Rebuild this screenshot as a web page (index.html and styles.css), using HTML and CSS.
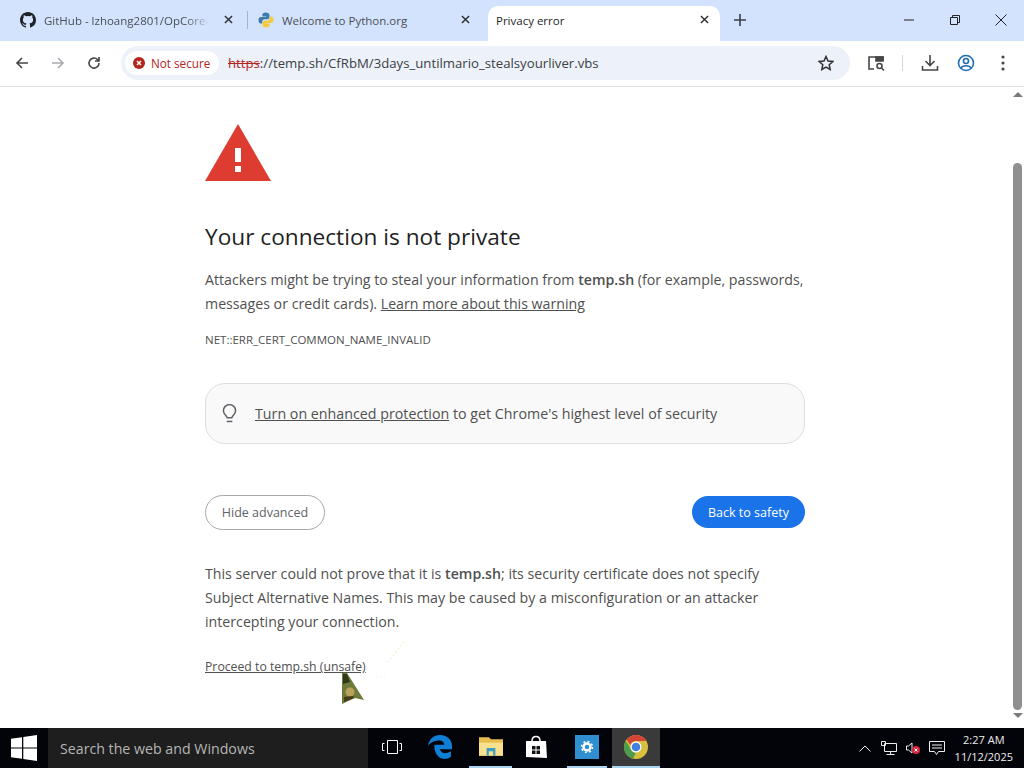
FILE: index.html
```html
<!DOCTYPE html>
<html lang="en">
<head>
    <meta charset="UTF-8">
    <title>Privacy error</title>
    <link rel="stylesheet" href="styles.css">
</head>
<body>
    <div class="tabstrip">
        <div class="tab">
            <svg class="favicon" viewBox="0 0 16 16"><path fill="#1f2328" d="M8 0C3.58 0 0 3.58 0 8c0 3.54 2.29 6.53 5.47 7.59.4.07.55-.17.55-.38v-1.34c-2.23.48-2.7-1.07-2.7-1.07-.36-.92-.89-1.17-.89-1.17-.73-.5.05-.49.05-.49.8.06 1.23.83 1.23.83.71 1.23 1.87.87 2.33.66.07-.52.28-.87.5-1.07-1.78-.2-3.64-.89-3.64-3.95 0-.87.31-1.59.82-2.15-.08-.2-.36-1.02.08-2.12 0 0 .67-.21 2.2.82a7.6 7.6 0 0 1 4 0c1.53-1.04 2.2-.82 2.2-.82.44 1.1.16 1.92.08 2.12.51.56.82 1.27.82 2.15 0 3.07-1.87 3.75-3.65 3.95.29.25.54.73.54 1.48v2.2c0 .21.15.46.55.38A8 8 0 0 0 16 8c0-4.42-3.58-8-8-8z"/></svg>
            <span class="tab-title tab-fade">GitHub - lzhoang2801/OpCore-</span>
            <svg class="tab-close" viewBox="0 0 10 10"><path d="M1 1l8 8M9 1l-8 8"/></svg>
        </div>
        <div class="tab-sep"></div>
        <div class="tab">
            <svg class="favicon" viewBox="0 0 16 16"><path fill="#3f7cac" d="M8 .5c-3 0-3.6 1.2-3.6 2.4V4.500h3.800V5H3C1.500 5 .5 6.200.5 8.200S1.500 11.500 3 11.500h1.200V9.700c0-1.300 1.100-2.400 2.500-2.400h2.700c1.100 0 2-.9 2-2V2.900C11.400 1.400 10 .5 8 .5z"/><path fill="#f5c93a" d="M8 15.500c3 0 3.600-1.200 3.600-2.400v-1.600H7.800V11H13c1.500 0 2.500-1.200 2.500-3.200S14.500 4.500 13 4.500h-1.200v1.800c0 1.300-1.100 2.400-2.500 2.400H6.600c-1.100 0-2 .9-2 2v2.400c0 1.500 1.400 2.400 3.400 2.400z"/></svg>
            <span class="tab-title">Welcome to Python.org</span>
            <svg class="tab-close" viewBox="0 0 10 10"><path d="M1 1l8 8M9 1l-8 8"/></svg>
        </div>
        <div class="tab tab-active">
            <span class="tab-title">Privacy error</span>
            <svg class="tab-close" viewBox="0 0 10 10"><path d="M1 1l8 8M9 1l-8 8"/></svg>
        </div>
        <svg class="new-tab" viewBox="0 0 12 12"><path d="M6 0v12M0 6h12"/></svg>
        <div class="window-controls">
            <svg viewBox="0 0 12 12"><path d="M1 6h10"/></svg>
            <svg viewBox="0 0 12 12"><path d="M1.500 3.500h7v7h-7zM3.500 3.500v-2h7v7h-2"/></svg>
            <svg viewBox="0 0 12 12"><path d="M.5 .5l11 11M11.500 .5l-11 11"/></svg>
        </div>
    </div>

    <div class="toolbar">
        <svg class="tool" viewBox="0 0 16 16"><path d="M14 8H3M8 3L3 8l5 5"/></svg>
        <svg class="tool tool-off" viewBox="0 0 16 16"><path d="M2 8h11M8 3l5 5-5 5"/></svg>
        <svg class="tool" viewBox="0 0 16 16"><path d="M13 8a5 5 0 1 1-1.500-3.500L13 6M13 2v4H9"/></svg>
        <div class="omnibox">
            <div class="chip">
                <svg class="chip-icon" viewBox="0 0 12 12"><circle cx="6" cy="6" r="6" fill="#b3261e"/><path d="M4 4l4 4M8 4l-4 4" stroke="#fff" stroke-width="1.500"/></svg>
                <span>Not secure</span>
            </div>
            <div class="url"><s class="url-scheme">https</s>://temp.sh/CfRbM/3days_untilmario_stealsyourliver.vbs</div>
            <svg class="star" viewBox="0 0 16 16"><path d="M8 1.500l2 4.500 4.800.5-3.600 3.200 1 4.800L8 12.100l-4.200 2.400 1-4.800L1.200 6.500 6 6z"/></svg>
        </div>
        <div class="toolbar-right">
            <svg class="tool" viewBox="0 0 18 18"><path d="M7 15H2V3h14v4"/><path d="M9 3h7v4H9z" fill="#444746"/><circle cx="12.500" cy="12" r="2.500"/><path d="M14.500 14l2.500 2.500"/></svg>
            <div class="toolbar-sep"></div>
            <svg class="tool" viewBox="0 0 18 18"><path d="M9 1v10M4.500 7L9 11.500 13.500 7M1.500 12v4h15v-4"/></svg>
            <svg class="tool tool-profile" viewBox="0 0 18 18"><circle cx="9" cy="9" r="7.500"/><circle cx="9" cy="7" r="2.500"/><path d="M4 14c1.500-3 8.500-3 10 0"/></svg>
            <svg class="tool tool-menu" viewBox="0 0 4 16"><circle cx="2" cy="2" r="1.600"/><circle cx="2" cy="8" r="1.600"/><circle cx="2" cy="14" r="1.600"/></svg>
        </div>
    </div>

    <div class="viewport">
        <div class="page">
            <svg class="warn-icon" viewBox="0 0 66 57"><path fill="#de3c31" d="M33 0l33 57H0z"/><path fill="#fff" d="M30 24h6v14h-6zM30 42h6v6h-6z"/></svg>
            <h1>Your connection is not private</h1>
            <p class="text">Attackers might be trying to steal your information from <b>temp.sh</b> (for example, passwords, messages or credit cards). <a>Learn more about this warning</a></p>
            <p class="error-code">NET::ERR_CERT_COMMON_NAME_INVALID</p>
            <div class="protect-box">
                <svg class="bulb" viewBox="0 0 16 20"><path d="M5.500 14.500C5 12 1.500 11 1.500 7a6.500 6.500 0 0 1 13 0c0 4-3.500 5-4 7.500z"/><path d="M5 18.500h6"/></svg>
                <span><a>Turn on enhanced protection</a> to get Chrome's highest level of security</span>
            </div>
            <div class="button-row">
                <button class="btn-outline">Hide advanced</button>
                <button class="btn-primary">Back to safety</button>
            </div>
            <p class="text details">This server could not prove that it is <b>temp.sh</b>; its security certificate does not specify Subject Alternative Names. This may be caused by a misconfiguration or an attacker intercepting your connection.</p>
            <a class="proceed">Proceed to temp.sh (unsafe)</a>
        </div>
        <div class="scrollbar">
            <div class="arrow-up"></div>
            <div class="thumb"></div>
            <div class="arrow-down"></div>
        </div>
        <svg class="cursor" viewBox="0 0 24 32"><path fill="#6d7a3a" d="M1 0h5l17 27-9-2L1 31z"/><path fill="#2f3a1c" d="M2 1h4l3 8-7 2z"/><circle cx="9" cy="19" r="4.500" fill="#b8a25e"/><path fill="#4a3a1a" d="M3 24l9-1 1 2-10 4z"/></svg>
        <svg class="trail" viewBox="0 0 30 40"><path fill="none" stroke="#f1ecc4" stroke-dasharray="2 2" d="M28 1L12 21"/><path fill="none" stroke="#f5efc8" stroke-dasharray="1 3" d="M0 36h12"/></svg>
    </div>

    <div class="taskbar">
        <div class="start">
            <svg viewBox="0 0 26 26"><path fill="#fff" d="M0 3.700l11-1.500v10.200H0zM12.300 2L26 0v12.400H12.300zM0 13.600h11v10.200L0 22.300zM12.300 13.600H26V26l-13.700-2z"/></svg>
        </div>
        <div class="search">Search the web and Windows</div>
        <div class="task-icons">
            <div class="task-item task-view">
                <svg viewBox="0 0 20 14"><path fill="none" stroke="#fff" d="M5.500 .5h10v13h-10zM2.500 3.500h-2v7h2M17.500 3.500h2v7h-2"/></svg>
            </div>
            <div class="task-item">
                <svg viewBox="0 0 22 22"><path fill="#0f7fd6" d="M11 0C5 0 1 4 0 10c2-3 6-5 10-5 3 0 5 2 5 4H6c-1 6 3 13 9 13 2 0 4-.5 6-2v-5c-3 2-9 3-10-2h11v-3C22 4 17 0 11 0z"/></svg>
            </div>
            <div class="task-item task-open task-explorer">
                <svg viewBox="0 0 22 20"><path fill="#e8bd4f" d="M0 1h9l2 2h11v15H0z"/><path fill="#f8e08e" d="M0 6h22v12H0z"/><path fill="#3a9bc4" d="M7 11h8v7h-2v-4H9v4H7z"/></svg>
            </div>
            <div class="task-item">
                <svg viewBox="0 0 22 24"><path fill="#fff" d="M1 6h20l1 17-21-1z"/><path fill="none" stroke="#fff" stroke-width="1.500" d="M7 6c0-6 8-6 8 0"/><path fill="#111" d="M7 11h3.500v3.500H7zM11.500 11H15v3.500h-3.500zM7 15.500h3.500V19H7zM11.500 15.500H15V19h-3.500z"/></svg>
            </div>
            <div class="task-item task-open task-settings">
                <svg viewBox="0 0 24 24"><path fill="#2f8fd0" d="M0 0h24v24H0z"/><circle cx="12" cy="12" r="3.500" fill="none" stroke="#fff" stroke-width="2.500"/><circle cx="12" cy="12" r="5.500" fill="none" stroke="#fff" stroke-width="1.500" stroke-dasharray="2 2.300"/></svg>
            </div>
            <div class="task-item task-open task-current">
                <svg viewBox="0 0 24 24"><circle cx="12" cy="12" r="12" fill="#d8c03f"/><path fill="#d64437" d="M12 0a12 12 0 0 1 10.400 6H12a6 6 0 0 0-5.700 4L2.600 4.700A12 12 0 0 1 12 0z"/><path fill="#4d9c4d" d="M1.800 5.700l5 8.600a6 6 0 0 0 5 3.700L9 23.700A12 12 0 0 1 1.800 5.700z"/><circle cx="12" cy="12" r="5.500" fill="#fff"/><circle cx="12" cy="12" r="4.300" fill="#3f7fe0"/></svg>
            </div>
        </div>
        <div class="tray">
            <svg class="tray-icon tray-caret" viewBox="0 0 12 7"><path d="M.5 6.500l5.500-5.500 5.500 5.500"/></svg>
            <svg class="tray-icon tray-net" viewBox="0 0 16 14"><path d="M3.500 2.500h12v8h-12zM9.500 10.500v3M5.500 13.500h8M.5 .5h4v4h-4z"/></svg>
            <div class="tray-sound">
                <svg class="tray-icon tray-speaker" viewBox="0 0 8 12"><path d="M6.500 1v10L3 8H1V4h2z"/></svg>
                <svg class="muted" viewBox="0 0 8 8"><circle cx="4" cy="4" r="4" fill="#d7263d"/><path d="M2.500 2.500l3 3M5.500 2.500l-3 3" stroke="#fff"/></svg>
            </div>
            <svg class="tray-icon tray-note" viewBox="0 0 16 15"><path d="M.5 .5h15v10H9.500l-2 3-2-3h-5zM3 4h10M3 7h10"/></svg>
            <div class="clock">
                <div>2:27 AM</div>
                <div>11/12/2025</div>
            </div>
        </div>
    </div>
</body>
</html>
```

FILE: styles.css
```css
* {
    box-sizing: border-box;
}

html, body {
    margin: 0;
    height: 768px;
    overflow: hidden;
}

body {
    display: flex;
    flex-direction: column;
    width: 1024px;
    font-family: "Open Sans", "Noto Sans", sans-serif;
    background-color: #fff;
}

svg {
    display: block;
    flex: none;
}

/* tabs */
.tabstrip {
    display: flex;
    align-items: flex-end;
    height: 41px;
    padding-left: 8px;
    background-color: #d3e3fd;
}

.tab {
    display: flex;
    align-items: center;
    width: 232px;
    height: 35px;
    padding: 0 7px 7px 12px;
    font-size: 11.500px;
    color: #4a4f57;
}

.tab-sep {
    width: 1px;
    height: 18px;
    margin: 0 -1px 12px 7px;
    background-color: #a9b4c8;
}

.tab:nth-child(3) {
    width: 226px;
    margin-left: 7px;
    padding-left: 4px;
    padding-right: 10px;
}

.tab-active {
    margin-left: 8px;
    padding: 0 11px 7px 8px;
    background-color: #fff;
    border-radius: 10px 10px 0 0;
    color: #1f1f1f;
}

.favicon {
    width: 16px;
    height: 16px;
    margin-right: 8px;
}

.tab-title {
    flex: 1;
    overflow: hidden;
    white-space: nowrap;
}

.tab-fade {
    margin-right: 12px;
    -webkit-mask-image: linear-gradient(to right, #000 84%, transparent 100%);
    mask-image: linear-gradient(to right, #000 84%, transparent 100%);
}

.tab-close {
    width: 9px;
    height: 9px;
    margin-bottom: 1px;
    fill: none;
    stroke: #2b2f33;
    stroke-width: 1.600;
}

.new-tab {
    width: 12px;
    height: 12px;
    margin: 0 0 15px 14px;
    fill: none;
    stroke: #3a3f45;
    stroke-width: 1.600;
}

.window-controls {
    display: flex;
    gap: 34px;
    margin-left: auto;
    margin-bottom: 15px;
    padding-right: 17px;
}

.window-controls svg {
    width: 12px;
    height: 12px;
    fill: none;
    stroke: #222;
    stroke-width: 1;
}

/* toolbar */
.toolbar {
    display: flex;
    align-items: center;
    height: 46px;
    padding: 0 14px 1px;
    background-color: #fff;
    border-bottom: 1px solid #dfe1e5;
}

.tool {
    width: 16px;
    height: 16px;
    margin-right: 20px;
    fill: none;
    stroke: #444746;
    stroke-width: 1.600;
}

.tool-off {
    stroke: #a8abaf;
}

.omnibox {
    display: flex;
    align-items: center;
    width: 729px;
    height: 34px;
    margin-left: -1px;
    padding-left: 4px;
    background-color: #edf2fa;
    border-radius: 17px;
}

.chip {
    display: flex;
    align-items: center;
    height: 24px;
    width: 94px;
    padding-left: 8px;
    background-color: #fff;
    border-radius: 12px;
    font-size: 11.700px;
    color: #b3261e;
}

.chip-icon {
    width: 12px;
    height: 12px;
    margin-right: 6px;
}

.url {
    flex: 1;
    margin-left: 9px;
    font-size: 13.200px;
    color: #3c4043;
    white-space: nowrap;
}

.url-scheme {
    color: #b3261e;
}

.star {
    width: 16px;
    height: 16px;
    margin-right: 16px;
    fill: none;
    stroke: #333;
    stroke-width: 1.500;
}

.toolbar-right {
    display: flex;
    align-items: center;
    margin-left: 17px;
}

.toolbar-right .tool {
    width: 18px;
    height: 18px;
    margin-right: 0;
}

.toolbar-sep {
    width: 1px;
    height: 16px;
    margin: 0 18px 0 17px;
    background-color: #d5d7db;
}

.toolbar-right .tool-profile {
    margin-left: 18px;
    stroke: #1f6fb5;
}

.toolbar-right .tool-menu {
    width: 4px;
    height: 16px;
    margin-left: 26px;
    fill: #444746;
    stroke: none;
}

/* page */
.viewport {
    position: relative;
    display: flex;
    height: 641px;
}

.page {
    flex: 1;
    padding: 37px 0 0 205px;
    color: #505050;
}

.warn-icon {
    width: 66px;
    height: 57px;
}

h1 {
    margin: 41px 0 0;
    font-size: 22.650px;
    font-weight: 400;
    line-height: 30px;
    color: #1f1f1f;
}

.text {
    width: 601px;
    margin: 16px 0 0;
    font-size: 14.200px;
    line-height: 24px;
}

.text b {
    font-weight: 600;
}

a {
    color: inherit;
    text-decoration: underline;
}

.error-code {
    margin: 16px 0 0;
    font-size: 11.500px;
    line-height: 16px;
}

.protect-box {
    display: flex;
    align-items: center;
    width: 600px;
    height: 61px;
    margin-top: 35px;
    padding-left: 16px;
    background-color: #f9f9f9;
    border: 1px solid #dedede;
    border-radius: 20px;
    font-size: 14.250px;
}

.bulb {
    width: 15px;
    height: 19px;
    margin-right: 18px;
    fill: none;
    stroke: #5f6368;
    stroke-width: 1.600;
}

.button-row {
    display: flex;
    justify-content: space-between;
    align-items: flex-start;
    width: 600px;
    margin-top: 51px;
}

button {
    font-family: inherit;
    font-size: 12.500px;
    border-radius: 18px;
}

.btn-outline {
    width: 120px;
    height: 35px;
    color: #5f6368;
    background-color: #fff;
    border: 1px solid #a5a8ad;
}

.btn-primary {
    width: 113px;
    height: 32px;
    margin-top: 1px;
    color: #fff;
    background-color: #1a73e8;
    border: none;
}

.details {
    margin-top: 32px;
}

.proceed {
    display: block;
    margin-top: 25px;
    font-size: 12.250px;
    line-height: 16px;
}

.scrollbar {
    display: flex;
    flex-direction: column;
    align-items: center;
    width: 13px;
    padding: 5px 0 6px;
}

.arrow-up {
    border: 5px solid transparent;
    border-top: none;
    border-bottom: 5px solid #7a7a7a;
}

.arrow-down {
    margin-top: 3px;
    border: 5px solid transparent;
    border-bottom: none;
    border-top: 5px solid #7a7a7a;
}

.thumb {
    width: 9px;
    height: 547px;
    margin-top: 66px;
    background-color: #8f8f8f;
    border-radius: 5px;
}

.cursor {
    position: absolute;
    left: 341px;
    top: 586px;
    width: 24px;
    height: 32px;
}

.trail {
    position: absolute;
    left: 376px;
    top: 554px;
    width: 30px;
    height: 40px;
}

/* taskbar */
.taskbar {
    display: flex;
    align-items: stretch;
    height: 40px;
    background-color: #03040a;
}

.start {
    display: flex;
    align-items: center;
    justify-content: center;
    width: 48px;
}

.start svg {
    width: 26px;
    height: 26px;
}

.search {
    display: flex;
    align-items: center;
    width: 320px;
    padding-left: 12px;
    background-color: #1e1e1e;
    color: #b5b5b5;
    font-size: 14.200px;
}

.task-icons {
    display: flex;
}

.task-item {
    display: flex;
    align-items: center;
    justify-content: center;
    width: 48px;
    border-bottom: 2px solid transparent;
}

.task-item svg {
    width: 24px;
    height: 24px;
}

.task-item.task-view svg {
    width: 20px;
    height: 14px;
}

.task-open {
    border-bottom-color: #a9d3ee;
}

.task-explorer {
    width: 43px;
    margin-left: 5px;
}

.task-settings {
    width: 40px;
    margin: 0 5px 0 7px;
}

.task-current {
    background-color: #3a3a3a;
}

.tray {
    display: flex;
    align-items: center;
    margin-left: auto;
    padding-right: 11px;
}

.tray-icon {
    fill: none;
    stroke: #eee;
    stroke-width: 1;
}

.tray-caret {
    width: 12px;
    height: 7px;
}

.tray-net {
    width: 16px;
    height: 14px;
    margin-left: 10px;
}

.tray-sound {
    display: flex;
    align-items: flex-end;
    margin-left: 8px;
}

.tray-speaker {
    width: 9px;
    height: 12px;
}

.muted {
    width: 8px;
    height: 8px;
    margin-left: -2px;
}

.tray-note {
    width: 16px;
    height: 15px;
    margin-left: 9px;
}

.clock {
    margin-left: 10px;
    color: #eee;
    font-size: 11px;
    line-height: 17px;
    text-align: center;
}
```
